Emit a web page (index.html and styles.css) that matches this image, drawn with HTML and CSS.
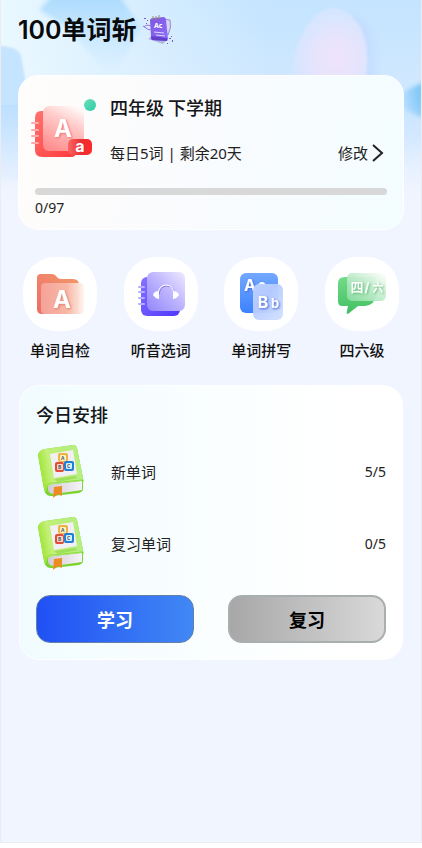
FILE: index.html
```
<!DOCTYPE html>
<html lang="zh-CN">
<head>
<meta charset="utf-8">
<meta name="viewport" content="width=device-width, initial-scale=1">
<title>100单词斩</title>
<link rel="stylesheet" href="styles.css">
</head>
<body>
<svg class="defs" aria-hidden="true">
  <defs>
    <linearGradient id="cover" x1="0" y1="0.2" x2="1" y2="0"><stop offset="0" stop-color="#a5e63e"/><stop offset="0.2" stop-color="#c3f07a"/><stop offset="0.55" stop-color="#b9ee78"/><stop offset="1" stop-color="#b4ee86"/></linearGradient>
    <linearGradient id="pages" x1="0" y1="0" x2="1" y2="0"><stop offset="0" stop-color="#d2cbd6"/><stop offset="1" stop-color="#f6f3f8"/></linearGradient>
    <symbol id="book" viewBox="0 0 48 56">
      <path d="M2 11 Q3 6 9 5 L37 1 Q40 1 41 4 L47 34 Q48 37 47 39 L47 46 Q46 48 43 49 L17 52 Q9 53 8 45Z" fill="#7bd42f"/>
      <path d="M12 43 Q13 40 17 40 L46 37 V46 L18 50 Q11 50 12 43Z" fill="url(#pages)"/>
      <path d="M2 11 Q3 6 9 5 L37 1 Q40 1 41 4 L47 34 Q47 37 43 37 L17 40 Q10 41 10 48 Q8 46 7 40Z" fill="url(#cover)"/>
      <path d="M10 46 Q9 39 17 39 L46 36" fill="none" stroke="#8fdf45" stroke-width="1"/>
      <path d="M18 35 L40 32 L41 34 L22 38Z" fill="#77c82e" opacity="0.4"/>
      <path d="M14 10 L37 6 L41 30 L18 34Z" fill="#f3f0f5"/>
      <rect x="22" y="9" width="10" height="9" rx="2" fill="#efb33d"/><rect x="24" y="11" width="6" height="6" rx="1" fill="#fff4ce"/>
      <rect x="19" y="18" width="9" height="10" rx="2" fill="#e04e37"/><rect x="21" y="20" width="6" height="6" rx="1" fill="#fbdcd0"/>
      <rect x="28" y="17" width="10" height="10" rx="2" fill="#217fd5"/><rect x="30" y="19" width="6" height="6" rx="1" fill="#d2f1ff"/>
      <g class="block-letter"><text x="25" y="16">A</text><text x="22" y="25">B</text><text x="31" y="24">C</text></g>
      <path d="M18 43 L26 42 V52 L22 50 L17 54Z" fill="#ed8b23"/>
    </symbol>
  </defs>
</svg>
<div class="app">
  <svg class="sky" viewBox="0 0 420 230" preserveAspectRatio="none" aria-hidden="true">
    <defs>
      <linearGradient id="skyBase" x1="0" y1="0" x2="0" y2="1"><stop offset="0" stop-color="#c4e4ff"/><stop offset="0.35" stop-color="#cfe8ff"/><stop offset="0.6" stop-color="#c3e2ff"/><stop offset="1" stop-color="#f1f6ff"/></linearGradient>
      <linearGradient id="leftLight" x1="0" y1="0" x2="1" y2="0"><stop offset="0" stop-color="#eaf8ff"/><stop offset="1" stop-color="#eaf8ff" stop-opacity="0"/></linearGradient>
      <linearGradient id="prism" x1="0" y1="0" x2="0" y2="1"><stop offset="0" stop-color="#a9d9fd"/><stop offset="1" stop-color="#c6e7ff" stop-opacity="0"/></linearGradient>
      <radialGradient id="petal" cx="0.6" cy="0.6" r="0.6"><stop offset="0" stop-color="#f0e2fc"/><stop offset="0.5" stop-color="#e5e4fd"/><stop offset="1" stop-color="#d3e6ff"/></radialGradient>
      <linearGradient id="petalShade" x1="0" y1="0" x2="1" y2="0"><stop offset="0" stop-color="#bcd5fc"/><stop offset="1" stop-color="#c8e1ff"/></linearGradient>
      <linearGradient id="wing" x1="1" y1="0" x2="0" y2="0.3"><stop offset="0" stop-color="#6fc2f5"/><stop offset="1" stop-color="#bfe0ff"/></linearGradient>
      <linearGradient id="fade" x1="0" y1="0" x2="0" y2="1"><stop offset="0" stop-color="#f1f5ff" stop-opacity="0"/><stop offset="1" stop-color="#f1f5ff"/></linearGradient>
      <filter id="soft"><feGaussianBlur stdDeviation="2"/></filter>
      <filter id="softer" x="-0.2" y="-0.2" width="1.4" height="1.4"><feGaussianBlur stdDeviation="4"/></filter>
      <filter id="edge"><feGaussianBlur stdDeviation="1"/></filter>
    </defs>
    <rect width="420" height="230" fill="url(#skyBase)"/>
    <rect width="270" height="105" fill="url(#leftLight)"/>
    <path d="M52 -5 H118 L140 28 L110 80 L70 30 L38 10Z" fill="url(#prism)" filter="url(#soft)"/>
    <path d="M-6 46 Q18 46 20 56 L25 84 V180 H-6Z" fill="#b9deff" opacity="0.75" filter="url(#edge)"/>
    <path d="M345 16 Q376 20 376 50 V90 H340Z" fill="url(#petalShade)" filter="url(#softer)"/>
    <path d="M289 92 Q292 42 310 20 Q325 4 340 9 Q352 14 360 28 Q371 52 363 92Z" fill="url(#petal)" filter="url(#edge)"/>
    <path d="M422 83 Q409 87 398 96 L398 108 L422 118Z" fill="url(#wing)" filter="url(#soft)"/>
    <rect y="105" width="420" height="95" fill="url(#fade)"/>
    <rect y="199" width="420" height="31" fill="#f1f5ff"/>
  </svg>

  <header class="header">
    <h1 class="title">100单词斩</h1>
    <svg class="logo" viewBox="0 0 32 32" aria-hidden="true">
      <defs><linearGradient id="logoFill" x1="0" y1="0" x2="1" y2="1"><stop offset="0" stop-color="#8055df"/><stop offset="1" stop-color="#8a70fa"/></linearGradient></defs>
      <path d="M5 25 L20 30 L25 25 L10 22Z" fill="#6e5798" opacity="0.35"/>
      <path d="M20 5 L27 6 Q29 13 25 21 L22 17Z" fill="#d8d5f8" stroke="#9989cb"/>
      <path d="M7 6 Q8 4 10 4 L21 3 Q23 4 23 6 L25 25 Q25 27 23 27 L9 26 Q7 25 8 22Z" fill="url(#logoFill)"/>
      <path d="M8 22 L24 24 V27 L9 26Z" fill="#6541cb"/>
      <path d="M10 2 V6 M13 2 V6 M16 1 V5" stroke="#99916f" stroke-width="1"/>
      <text class="logo-text" x="11" y="14">Ac</text>
      <path d="M11 18 L21 19 M13 21 L22 22" stroke="#dfd6ff" stroke-width="1"/>
      <path d="M0 12 Q5 17 11 16 M1 13 Q3 10 8 12" fill="none" stroke="#9370e5"/>
      <path d="M1 4h2v1h-2z M4 6h1v1h-1z M3 9h1v1h-1z M26 24h2v1h-2z M29 26h1v2h-1z M24 29h1v1h-1z M28 22h1v1h-1z" fill="#7959ce"/>
    </svg>
  </header>

  <main>
    <section class="card plan">
      <div class="plan-top">
        <svg class="plan-icon" viewBox="0 0 64 64" aria-hidden="true">
          <defs>
            <linearGradient id="redBook" x1="0" y1="0" x2="1" y2="1"><stop offset="0" stop-color="#ff746f"/><stop offset="1" stop-color="#ff3a3c"/></linearGradient>
            <linearGradient id="redGlass" x1="0.75" y1="0" x2="0.3" y2="1"><stop offset="0" stop-color="#fff9f7"/><stop offset="0.35" stop-color="#ffccca"/><stop offset="1" stop-color="#ff8e8e"/></linearGradient>
            <linearGradient id="redTag" x1="0" y1="0" x2="1" y2="0"><stop offset="0" stop-color="#fb6664"/><stop offset="0.55" stop-color="#e93034"/><stop offset="1" stop-color="#ff2929"/></linearGradient>
            <linearGradient id="mint" x1="0" y1="0" x2="1" y2="1"><stop offset="0" stop-color="#72ddbd"/><stop offset="1" stop-color="#26cda5"/></linearGradient>
          </defs>
          <path d="M10 16 H36 Q45 16 45 24 V57 Q45 62 40 62 H11 Q4 62 4 55 V23 Q4 16 10 16Z" fill="url(#redBook)"/>
          <rect x="12" y="11" width="41" height="45" rx="6" fill="url(#redGlass)"/>
          <path d="M1 28h6 M1 35h6 M1 41h6 M1 48h6" stroke="#ffaaa7" stroke-width="2" stroke-linecap="round"/>
          <rect x="37" y="44" width="24" height="16" rx="5" fill="url(#redTag)"/>
          <text class="letter red-a" x="32" y="42">A</text>
          <text class="letter red-small" x="49" y="57">a</text>
          <circle cx="59" cy="10" r="6" fill="url(#mint)"/>
        </svg>
        <div class="plan-info">
          <h2 class="heading">四年级 下学期</h2>
          <div class="plan-row">
            <span>每日5词 | 剩余20天</span>
            <a class="edit" href="#">修改<svg class="chevron" viewBox="0 0 12 20" aria-hidden="true"><path d="M1 2 L10 10 L1 18"/></svg></a>
          </div>
        </div>
      </div>
      <div class="progress" role="progressbar" aria-valuemin="0" aria-valuemax="97" aria-valuenow="0" aria-label="0/97"></div>
      <p class="count">0/97</p>
    </section>

    <nav class="tools">
      <a class="tool" href="#">
        <span class="tile"><svg viewBox="0 0 74 74" aria-hidden="true">
          <defs>
            <linearGradient id="folder" x1="0" y1="1" x2="1" y2="0"><stop offset="0" stop-color="#ee6b66"/><stop offset="1" stop-color="#f29b6b"/></linearGradient>
            <linearGradient id="folderGlass" x1="0" y1="0" x2="1" y2="0"><stop offset="0" stop-color="#f5a49b"/><stop offset="0.6" stop-color="#f7baa8"/><stop offset="1" stop-color="#fff5f0"/></linearGradient>
          </defs>
          <path d="M18 17 H29 Q32 17 34 20 Q35 22 38 22 H50 Q56 22 56 28 V57 H19 Q14 57 14 52 V21 Q14 17 18 17Z" fill="url(#folder)"/>
          <rect x="18" y="26" width="43" height="31" rx="4" fill="url(#folderGlass)" opacity="0.96"/>
          <text class="letter folder-a" x="39" y="51">A</text>
        </svg></span>
        <span>单词自检</span>
      </a>
      <a class="tool" href="#">
        <span class="tile"><svg viewBox="0 0 74 74" aria-hidden="true">
          <defs>
            <linearGradient id="violet" x1="0" y1="0" x2="1" y2="1"><stop offset="0" stop-color="#8871ff"/><stop offset="1" stop-color="#4f39fc"/></linearGradient>
            <linearGradient id="violetGlass" x1="1" y1="0" x2="0" y2="1"><stop offset="0" stop-color="#eeeaff"/><stop offset="0.5" stop-color="#bcb2ff"/><stop offset="1" stop-color="#9286fa"/></linearGradient>
          </defs>
          <rect x="17" y="20" width="39" height="39" rx="6" fill="url(#violet)"/>
          <rect x="23" y="15" width="38" height="39" rx="6" fill="url(#violetGlass)"/>
          <path d="M15 30h5 M15 35h5 M15 41h5 M15 47h5" stroke="#b6aefe" stroke-width="2" stroke-linecap="round"/>
          <path d="M34 37 Q35 28 42 28 Q49 28 50 37" transform="translate(1 1)" fill="none" stroke="#887ce4" stroke-width="1"/>
          <path d="M34 37 Q35 28 42 28 Q49 28 50 37" fill="none" stroke="#fff" stroke-width="1"/>
          <path d="M35 34 V42 Q32 42 29 38 Q30 34 35 34Z M49 34 V42 Q52 42 55 38 Q54 34 49 34Z" fill="#fff"/>
        </svg></span>
        <span>听音选词</span>
      </a>
      <a class="tool" href="#">
        <span class="tile"><svg viewBox="0 0 74 74" aria-hidden="true">
          <defs>
            <linearGradient id="blueCard" x1="0" y1="0" x2="0" y2="1"><stop offset="0" stop-color="#73a8ff"/><stop offset="1" stop-color="#3c82ff"/></linearGradient>
            <linearGradient id="blueGlass" x1="0" y1="0" x2="1" y2="1"><stop offset="0" stop-color="#bcd2ff"/><stop offset="0.4" stop-color="#b8ccff"/><stop offset="1" stop-color="#d2e1ff"/></linearGradient>
          </defs>
          <rect x="16" y="16" width="38" height="40" rx="6" fill="url(#blueCard)"/>
          <text class="letter blue-a" x="26" y="34">A</text>
          <path d="M35 28 Q38 24 41 28" fill="none" stroke="#fff" stroke-width="2"/>
          <rect x="29" y="27" width="30" height="36" rx="6" fill="url(#blueGlass)" opacity="0.96"/>
          <text class="letter blue-b" x="39" y="51">B</text><text class="letter blue-small" x="51" y="51">b</text>
        </svg></span>
        <span>单词拼写</span>
      </a>
      <a class="tool" href="#">
        <span class="tile"><svg viewBox="0 0 74 74" aria-hidden="true">
          <defs>
            <linearGradient id="green" x1="0" y1="0" x2="0" y2="1"><stop offset="0" stop-color="#72db87"/><stop offset="1" stop-color="#42bf63"/></linearGradient>
            <linearGradient id="greenGlass" x1="1" y1="0" x2="0" y2="1"><stop offset="0" stop-color="#fff"/><stop offset="0.5" stop-color="#c1eccb"/><stop offset="1" stop-color="#87dda0"/></linearGradient>
          </defs>
          <path d="M20 20 H51 V38 Q50 48 40 49 H33 L23 57 Q21 57 22 54 L23 49 H17 Q13 49 13 44 V26 Q13 20 20 20Z" fill="url(#green)"/>
          <rect x="22" y="16" width="39" height="28" rx="5" fill="url(#greenGlass)" opacity="0.95"/>
          <text class="letter green-four" x="32" y="35">四</text><text class="letter green-slash" x="42" y="35">/</text><text class="letter green-six" x="53" y="35">六</text>
        </svg></span>
        <span>四六级</span>
      </a>
    </nav>

    <section class="card today">
      <h2 class="heading">今日安排</h2>
      <ul class="tasks">
        <li class="task"><svg class="book" aria-hidden="true"><use href="#book"/></svg><span class="task-name">新单词</span><span class="task-count">5/5</span></li>
        <li class="task"><svg class="book" aria-hidden="true"><use href="#book"/></svg><span class="task-name">复习单词</span><span class="task-count">0/5</span></li>
      </ul>
      <div class="actions">
        <button class="action learn" type="button">学习</button>
        <button class="action review" type="button">复习</button>
      </div>
    </section>
  </main>
</div>
</body>
</html>
```
FILE: styles.css
```
* {
  box-sizing: border-box;
}

body {
  min-height: 100vh;
  padding: 0 1px 6px;
  margin: 0;
  background: #fff;
  color: #222;
  font: 15px/24px "Noto Sans", "Noto Sans CJK SC", sans-serif;
}

h1, h2, p, ul {
  margin: 0;
  padding: 0;
}

a {
  color: inherit;
  text-decoration: none;
}

.defs {
  position: absolute;
  width: 0;
  height: 0;
}

.app {
  position: relative;
  min-height: calc(100vh - 6px);
  padding: 0 17px;
  background: #f1f5ff;
  box-shadow: 0 0 0 1px #ececf0;
}

.sky {
  position: absolute;
  top: 0;
  left: 0;
  width: 100%;
  height: 230px;
}

.header {
  position: relative;
  display: flex;
  align-items: center;
  gap: 6px;
  height: 75px;
  padding-bottom: 16px;
}

.title {
  color: #080a0c;
  font: 600 25px/32px Inter, "Noto Sans CJK SC", sans-serif;
}

.logo {
  width: 32px;
  height: 32px;
}

.logo-text {
  fill: #fff;
  font: 700 7px "Noto Sans", sans-serif;
}

main {
  position: relative;
}

.card {
  border: 1px solid #fff;
  border-radius: 20px;
}

.plan {
  height: 155px;
  padding: 19px 16px 0;
  background: linear-gradient(100deg, #fffdfb, #f9fbfe 50%, #f3fdff);
}

.plan-top {
  display: flex;
  gap: 15px;
  height: 93px;
}

.plan-icon {
  flex: none;
  width: 64px;
  height: 64px;
  margin-left: -4px;
  overflow: visible;
}

.plan-info {
  flex: 1;
}

.heading {
  color: #151719;
  font: 500 18px/24px "Noto Sans CJK SC", sans-serif;
}

.plan-row {
  display: flex;
  align-items: center;
  justify-content: space-between;
  margin-top: 22px;
}

.edit {
  display: flex;
  align-items: center;
  gap: 4px;
  margin-right: 3px;
}

.chevron {
  width: 12px;
  height: 20px;
  fill: none;
  stroke: #222;
  stroke-width: 2;
}

.progress {
  height: 7px;
  border-radius: 4px;
  background: #d8d8d8;
}

.count {
  margin-top: 1px;
  font-size: 14px;
}

.letter {
  fill: #fff;
  font-family: Inter, "Noto Sans CJK SC", sans-serif;
  font-weight: 700;
  text-anchor: middle;
}

.red-a {
  font-size: 24px;
  filter: drop-shadow(1px 1px 1px #ef7777);
}

.red-small {
  font-size: 16px;
}

.folder-a {
  font-size: 24px;
  filter: drop-shadow(1px 1px 1px #df8168);
}

.blue-a, .blue-b {
  font-size: 16px;
  filter: drop-shadow(1px 1px 1px #4c68db);
}

.blue-small {
  font-size: 13px;
  filter: drop-shadow(1px 1px 1px #4c68db);
}

.green-four, .green-slash {
  font-size: 13px;
  filter: drop-shadow(1px 1px 1px #60bb79);
}

.green-six {
  font-size: 11px;
  filter: drop-shadow(1px 1px 1px #60bb79);
}

.block-letter {
  fill: #555;
  font: 700 5px "Noto Sans", sans-serif;
}

.tools {
  display: flex;
  justify-content: space-between;
  margin: 27px 5px 0;
}

.tool {
  display: flex;
  flex-direction: column;
  align-items: center;
  gap: 7px;
  width: 74px;
  color: #111;
  font-weight: 500;
}

.tile {
  width: 74px;
  height: 74px;
  border-radius: 32px;
  background: #fff;
}

.tile svg {
  display: block;
  width: 100%;
  height: 100%;
}

.today {
  padding: 16px;
  margin: 23px 1px 0;
  background: linear-gradient(90deg, #f1fcff, #fafeff 50%, #fff 85%);
}

.tasks {
  margin-top: 10px;
  list-style: none;
}

.task {
  display: flex;
  align-items: center;
  height: 72px;
}

.book {
  width: 48px;
  height: 56px;
}

.task-name {
  flex: 1;
  padding-left: 27px;
}

.task-count {
  font-size: 14px;
}

.actions {
  display: grid;
  grid-template-columns: 1fr 1fr;
  gap: 34px;
  margin-top: 15px;
}

.action {
  height: 48px;
  border: 2px solid #a9aeae;
  border-radius: 14px;
  font: 700 18px/24px "Noto Sans CJK SC", sans-serif;
}

.learn {
  border: 1px solid #6480a4;
  background: linear-gradient(90deg, #2050f4, #4188f5);
  color: #fff;
}

.review {
  background: linear-gradient(90deg, #a7a7a7, #d9d9d9);
  color: #000;
}
```
